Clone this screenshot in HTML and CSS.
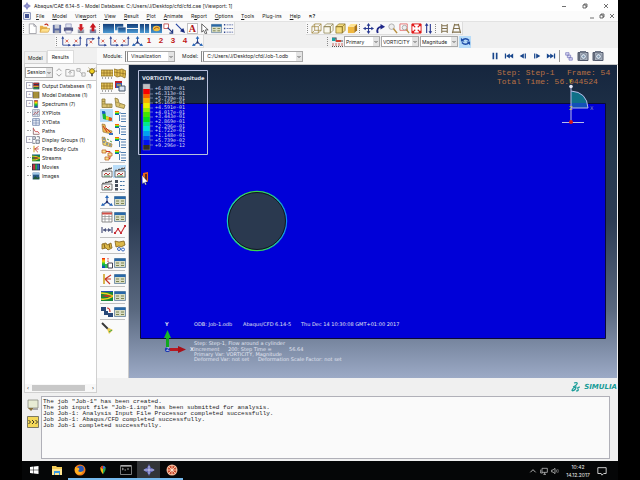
FILE: index.html
```
<!DOCTYPE html>
<html lang="en">
<head>
<meta charset="utf-8">
<title>Abaqus/CAE 6.14-5</title>
<link rel="stylesheet" href="styles.css">
</head>
<body>
<svg class="defs" aria-hidden="true">
  <defs>
    <linearGradient id="rainbow" x1="0" y1="0" x2="0" y2="1"><stop offset="0" stop-color="#f01010"/><stop offset=".3" stop-color="#f8e000"/><stop offset=".6" stop-color="#10c830"/><stop offset="1" stop-color="#1030e0"/></linearGradient>
    <linearGradient id="pane" x1="0" y1="0" x2="0" y2="1"><stop offset="0" stop-color="#123c78"/><stop offset="1" stop-color="#4c9bd4"/></linearGradient>
    <symbol id="logo" viewBox="0 0 12 12"><path d="M6 0 8 4 12 6 8 8 6 12 4 8 0 6 4 4Z" fill="#6468b4"/><path d="M2.500 4h7v4h-7z" fill="#6468b4"/><path d="M1 6h10M6 2v8" stroke="#d8daf4" stroke-width=".8"/></symbol>
    <symbol id="new" viewBox="0 0 12 12"><path d="M2.500 1h5l2.500 2.500v8H2.500z" fill="#fff" stroke="#8c8c94" stroke-width=".8"/><path d="M7.500 1v2.500H10" fill="none" stroke="#8c8c94" stroke-width=".8"/></symbol>
    <symbol id="open" viewBox="0 0 12 12"><path d="M1 10V3h3l1 1h4v6z" fill="#e8b048"/><path d="M1 10 3 6h9l-2 4z" fill="#ffe08c" stroke="#c08828" stroke-width=".5"/><path d="M6 2q3-2 4 1" fill="none" stroke="#c03020" stroke-width="1.200"/></symbol>
    <symbol id="save" viewBox="0 0 12 12"><path d="M2 2h9v9H2z" fill="#5868a0"/><path d="M4 2h5v4H4z" fill="#c8ccd8"/><path d="M4 8h5v3H4z" fill="#a8acb8"/></symbol>
    <symbol id="print" viewBox="0 0 12 12"><path d="M3 1h6v4H3z" fill="#e0e4f0" stroke="#7478a8" stroke-width=".6"/><path d="M1 5h10v4H1z" fill="#555a88"/><path d="M3 8h6v3H3z" fill="#f4f4f4" stroke="#7478a8" stroke-width=".6"/></symbol>
    <symbol id="dbdown" viewBox="0 0 12 12"><path d="M3 7h7v4H3z" fill="#a0a4b8"/><path d="M5 1h3v4h2L6.500 9 3 5h2z" fill="#d02028"/><path d="M4 10h5" stroke="#555" stroke-width=".8"/></symbol>
    <symbol id="dbup" viewBox="0 0 12 12"><path d="M3 7h7v4H3z" fill="#8086a8"/><path d="M5 9h3V5h2L6.500 0 3 5h2z" fill="#c81820"/></symbol>
    <symbol id="pane1" viewBox="0 0 12 12"><path d="M0 1h12v10H0z" fill="url(#pane)"/></symbol>
    <symbol id="pane2" viewBox="0 0 12 12"><path d="M0 1h9v7H0z" fill="url(#pane)"/><path d="M3 4.500h9V11H3z" fill="url(#pane)" stroke="#fff" stroke-width=".6"/></symbol>
    <symbol id="pane3" viewBox="0 0 12 12"><path d="M0 1h12v4.500H0zM0 6.500h12V11H0z" fill="url(#pane)"/></symbol>
    <symbol id="pane4" viewBox="0 0 12 12"><path d="M1 1h4.500v10H1zM6.500 1H11v10H6.500z" fill="url(#pane)"/></symbol>
    <symbol id="pane5" viewBox="0 0 12 12"><path d="M0 1h12v10H0z" fill="url(#pane)"/><ellipse cx="6" cy="6" rx="4" ry="3" fill="#f0c040"/><path d="M3 7q3-4 6-1" fill="none" stroke="#a84818"/></symbol>
    <symbol id="link" viewBox="0 0 12 12"><path d="M1 1h5v5H1z" fill="#fff" stroke="#b83030" stroke-width=".8"/><path d="m5 5 5 5M10.500 7v4H7" fill="none" stroke="#203880" stroke-width="1.300"/></symbol>
    <symbol id="arrow" viewBox="0 0 12 12"><path d="m1 1 7 7" stroke="#2040a0" stroke-width="1.200"/><path d="M11 11 5.500 9 9 5.500z" fill="#182c80"/></symbol>
    <symbol id="letter" viewBox="0 0 12 12"><path d="M.5.5h11v11H.5z" fill="#fff" stroke="#8c8c8c" stroke-width=".6"/><text x="2" y="10" font-family="Liberation Serif, serif" font-weight="bold" font-size="11" fill="#b01818">A</text></symbol>
    <symbol id="pointer" viewBox="0 0 12 12"><path d="M3 1v9l2-2 2 4 1.500-.8L7 7.500h3z" fill="#fff" stroke="#333" stroke-width=".8"/></symbol>
    <symbol id="table" viewBox="0 0 12 12"><path d="M.5 1.500h11v9H.5z" fill="#d8dcc4" stroke="#6080a0" stroke-width=".8"/><path d="M.5 1.500h11v2.500H.5z" fill="#2868a8"/><path d="M2 6h3M7 6h3M2 8.500h3M7 8.500h3" stroke="#7c8450"/></symbol>
    <symbol id="list" viewBox="0 0 12 12"><path d="M1 2h1.500M1 6h1.500M1 10h1.500" stroke="#304890" stroke-width="1.600"/><path d="M4 2h7M4 6h7M4 10h7" stroke="#6878b0" stroke-dasharray="2 .7"/></symbol>
    <symbol id="wirebox" viewBox="0 0 12 12"><path d="M1 4h7v7H1zM4 1h7v7H4zM1 4l3-3M8 4l3-3M1 11l3-3M8 11l3-3" fill="none" stroke="#a08840" stroke-width=".8"/></symbol>
    <symbol id="whitebox" viewBox="0 0 12 12"><path d="M1 4h7v7H1zM1 4l3-3h7v7l-3 3V4zM8 4l3-3" fill="#faf9ee" stroke="#8c8050" stroke-width=".8"/></symbol>
    <symbol id="yellowbox" viewBox="0 0 12 12"><path d="M1 4h7v7H1zM1 4l3-3h7v7l-3 3V4zM8 4l3-3" fill="#f4dc80" stroke="#8c7428" stroke-width=".8"/></symbol>
    <symbol id="solidbox" viewBox="0 0 12 12"><path d="M1 4h7v7H1z" fill="#f0b840"/><path d="m1 4 3-3h7L8 4z" fill="#ffe490"/><path d="m8 4 3-3v7l-3 3z" fill="#a87418"/></symbol>
    <symbol id="pan" viewBox="0 0 12 12"><path d="M6 1v10M1 6h10" stroke="#283890" stroke-width="1.200"/><path d="m6 0 2 3H4zM6 12l2-3H4zM0 6l3-2v4zM12 6 9 4v4z" fill="#283890"/></symbol>
    <symbol id="rotate" viewBox="0 0 12 12"><path d="M3 11Q1 5 7 4" fill="none" stroke="#202888" stroke-width="2"/><path d="m6 1 5 3-5 3z" fill="#202888"/></symbol>
    <symbol id="zoom" viewBox="0 0 12 12"><circle cx="5" cy="4" r="3" fill="#eee" stroke="#aaa"/><path d="m7 6 4 5" stroke="#b89040" stroke-width="1.600"/></symbol>
    <symbol id="zoombox" viewBox="0 0 12 12"><path d="M1 1h8v7H1z" fill="none" stroke="#e05050" stroke-width=".8"/><circle cx="6" cy="5" r="2.500" fill="#eee" stroke="#aaa"/><path d="m8 7 3 4" stroke="#b89040" stroke-width="1.500"/></symbol>
    <symbol id="fit" viewBox="0 0 12 12"><path d="M1 1h10v10H1z" fill="#fff" stroke="#e01818"/><path d="m2 2 8 8M10 2l-8 8" stroke="#e01818" stroke-width="1.400"/><circle cx="6" cy="6" r="2" fill="#fff"/><path d="M1 1h3L1 4zM11 1H8l3 3zM1 11h3L1 8zM11 11H8l3-3z" fill="#e01818"/></symbol>
    <symbol id="updown" viewBox="0 0 12 12"><path d="M4 2v9M8 1v9" stroke="#283890" stroke-width="1.200"/><path d="m4 0 2 3H2zM8 12l2-3H6z" fill="#283890"/></symbol>
    <symbol id="ladder" viewBox="0 0 12 12"><path d="M3 1v10M9 1v10M3 3h6M3 6h6M3 9h6" stroke="#80704c" stroke-width="1.100"/></symbol>
    <symbol id="persp" viewBox="0 0 12 12"><path d="M4 1 1.500 11M8 1l2.500 10M4 2h4M3 6h6M2 10h8" stroke="#80704c" stroke-width="1.200"/></symbol>
    <symbol id="axisa" viewBox="0 0 12 12"><path d="M3 10V2M3 10h8" stroke="#304898" fill="none"/><path d="M3 0 4.500 3h-3zM12 10 9 8.500v3z" fill="#304898"/><path d="m6 4 3 3M9 4 6 7" stroke="#d04030" stroke-width=".9"/></symbol>
    <symbol id="axisb" viewBox="0 0 12 12"><path d="M9 10V2M9 10H1" stroke="#304898" fill="none"/><path d="m9 0 1.500 3h-3zM0 10l3-1.500v3z" fill="#304898"/><path d="m3 4 3 3M6 4 3 7" stroke="#d04030" stroke-width=".9"/></symbol>
    <symbol id="axisc" viewBox="0 0 12 12"><path d="M3 3v8M3 3h8" stroke="#304898" fill="none"/><path d="m3 12 1.500-3h-3zM12 3 9 1.500v3z" fill="#304898"/><path d="m6 5 3 3M9 5 6 8" stroke="#d04030" stroke-width=".9"/></symbol>
    <symbol id="triad" viewBox="0 0 12 12"><path d="M6 7V2M6 7l-4 3M6 7l4 3" stroke="#2850a0" stroke-width="1.100"/><path d="m6 0 2 3H4zM0 11l1.500-3L4 10.500zM12 11l-1.500-3L8 10.500z" fill="#2868b8"/><circle cx="6" cy="7" r="1.200" fill="#283068"/></symbol>
    <symbol id="var" viewBox="0 0 12 12"><path d="M1 2h4v3h7" fill="none" stroke="#404858" stroke-width="1.200"/><path d="M1 2h3v3H1z" fill="#18a0a0"/><path d="M5 4h5v2H5z" fill="#d04030"/><path d="M2 7v3M5 7v3M8 7v3M11 7v3" stroke="#c04840" stroke-width=".8"/><path d="M1 10.500h11" stroke="#555" stroke-dasharray="1 1"/></symbol>
    <symbol id="sync" viewBox="0 0 12 12"><path d="M2 5q4-4 8 0M10 7q-4 4-8 0" fill="none" stroke="#1c4ca8" stroke-width="1.600"/><path d="M1 2v4h4zM11 10V6H7z" fill="#1c4ca8"/></symbol>
    <symbol id="pause" viewBox="0 0 12 12"><path d="M3 2h2v8H3zM7 2h2v8H7z" fill="#18468c"/></symbol>
    <symbol id="first" viewBox="0 0 12 12"><path d="M1 3h1.500v6H1zM7 3v6L2.500 6zM11 3v6L6.500 6z" fill="#18468c"/></symbol>
    <symbol id="prev" viewBox="0 0 12 12"><path d="M7 3v6L2 6zM8 3h1.500v6H8z" fill="#18468c"/></symbol>
    <symbol id="next" viewBox="0 0 12 12"><path d="M5 3v6l5-3zM2.500 3H4v6H2.500z" fill="#18468c"/></symbol>
    <symbol id="last" viewBox="0 0 12 12"><path d="M9.500 3H11v6H9.500zM5 3v6l4.500-3zM1 3v6l4.500-3z" fill="#18468c"/></symbol>
    <symbol id="frames" viewBox="0 0 12 12"><path d="M2 2h4v3H2zM4 5h4v3H4zM6 8h4v3H6z" fill="#d8d8f4" stroke="#7070b8" stroke-width=".8"/></symbol>
    <symbol id="camera" viewBox="0 0 12 12"><path d="M1 2.500h10v8H1z" fill="#a8b0bc" stroke="#50586c"/><path d="M3 1h6v2H3z" fill="#707888"/><path d="M1 3h2v8H1z" fill="#606878"/><circle cx="6.500" cy="6.500" r="2.800" fill="#e8f0f8" stroke="#707c90"/><circle cx="6.500" cy="6.500" r="1.200" fill="#8098b0"/></symbol>
    <symbol id="mesh" viewBox="0 0 12 12"><path d="M0 3h12v6H0z" fill="#e0c058" stroke="#8c6c20" stroke-width=".8"/><path d="M3 3v6M6 3v6M9 3v6M0 6h12" stroke="#8c6c20" stroke-width=".7"/><path d="M1 11h10" stroke="#555" stroke-dasharray="1 2"/></symbol>
    <symbol id="meshb" viewBox="0 0 12 12"><path d="m0 2 4 1 4-1 4 2-1 7-4-2-4 1-3-2z" fill="#e4c050" stroke="#8c6c20" stroke-width=".8"/><path d="M3 3v6M6 3v6M9 3v6M0 5l12 2" stroke="#8c6c20" stroke-width=".7"/></symbol>
    <symbol id="ell" viewBox="0 0 12 12"><path d="M1 2h3v5h7v3.500H1z" fill="#d8c070" stroke="#8c7838" stroke-width=".8"/><path d="M1 4.500h3M1 7h3M6 7v3M9 7v3" stroke="#8c7838" stroke-width=".6"/></symbol>
    <symbol id="ellb" viewBox="0 0 12 12"><path d="m1 1 3 1 1 4 6 2-1 3.500-8-2z" fill="#dcc470" stroke="#8c7838" stroke-width=".8"/><path d="m2 5 2.500 1M6 7 5.500 9" stroke="#8c7838" stroke-width=".6"/></symbol>
    <symbol id="contour" viewBox="0 0 12 12"><path d="m1 1 3 .5 1 4.500 6 2-.5 3L2 9z" fill="#18b838"/><path d="m1 1 3 .5.5 2L1.500 4z" fill="#1850d8"/><path d="m8 7 3 1-.5 3-3-.5z" fill="#e84818"/><path d="m5 6 3 1-.5 3L5 9.700z" fill="#f0d020"/></symbol>
    <symbol id="vector" viewBox="0 0 12 12"><path d="m1 1 3 .5 1 4.500 6 2-.5 3L2 9z" fill="#e8b850" stroke="#8c6830" stroke-width=".6"/><path d="m2 3 4 6M5 5l5 5" stroke="#d03020"/><path d="M8 10h4v2H8z" fill="#3870c0"/></symbol>
    <symbol id="orient" viewBox="0 0 12 12"><path d="m1 1 3 .5 1 4.500 6 2-.5 3L2 9z" fill="#e8d070" stroke="#8c6830" stroke-width=".6"/><path d="M2 3h2M2 6h2M5 8h2M8 9h2" stroke="#3060c0"/><path d="m6 3 2 1M9 5l2 1" stroke="#58a048"/></symbol>
    <symbol id="opts" viewBox="0 0 12 12"><path d="M1 1h4v4H1z" fill="url(#rainbow)"/><path d="M5 3h2M7 6h5M7 9h5M7 11.500h5M5.500 5v6" stroke="#3c70a8" stroke-width=".9"/><path d="M7 3.500h5" stroke="#3c70a8" stroke-width=".9"/></symbol>
    <symbol id="spectrum" viewBox="0 0 12 12"><path d="M1 1h7v7H1z" fill="#c02028"/><path d="M2 3h6v5H2z" fill="#3858b0"/><path d="M5 6h6v5H5z" fill="#dce4f0" stroke="#456"/><path d="M3 5h4" stroke="#f8d020"/></symbol>
    <symbol id="boxes" viewBox="0 0 12 12"><path d="M1 1h4v3H1zM7 4h4v3H7zM4 8h4v3H4z" fill="#f8e090" stroke="#c06828" stroke-width=".8"/><path d="M5 2.500h4V4M9 7v2.500H8" fill="none" stroke="#d03820"/></symbol>
    <symbol id="clap" viewBox="0 0 12 12"><path d="M1 5h10v6H1z" fill="#f4f4f4" stroke="#555" stroke-width=".8"/><path d="m1 4 9.500-3 .5 2-9.500 2z" fill="#555"/><path d="m3 4 .5-1M6 3l.5-1M9 2l.5-1" stroke="#fff"/><path d="m3 9 2-2 2 2 2-2" fill="none" stroke="#b83830"/><path d="M3 10h6" stroke="#308848" stroke-width=".8"/></symbol>
    <symbol id="checks" viewBox="0 0 12 12"><path d="M1 1h3v3H1zM1 5h3v3H1zM1 9h3v2.500H1z" fill="#444c58"/><path d="M6 2.500h5M6 6.500h5M6 10.500h5" stroke="#4878a8" stroke-dasharray="2 .6"/></symbol>
    <symbol id="sheet" viewBox="0 0 12 12"><path d="M1 1h10v10H1z" fill="#fff" stroke="#707070" stroke-width=".8"/><path d="M1 2.500h10" stroke="#d05048" stroke-width="2"/><path d="M1 5.500h10M1 8h10M4 4v7M8 4v7" stroke="#888" stroke-width=".7"/></symbol>
    <symbol id="span" viewBox="0 0 12 12"><path d="M1 3v6M11 3v6M2 6h8" stroke="#505880" stroke-width="1.200"/><path d="m2 6 3-2v4zM10 6 7 4v4z" fill="#505880"/></symbol>
    <symbol id="chart" viewBox="0 0 12 12"><path d="m1 9 3-4 3 4 4-7" fill="none" stroke="#c83038" stroke-width="1.100"/><path d="M0 8h2v2H0zM3 4h2v2H3zM6 8h2v2H6zM10 1h2v2h-2z" fill="#c83038"/></symbol>
    <symbol id="bits" viewBox="0 0 12 12"><path d="m1 4 4-1 1 2 4-2 1 5-4 2-2-2-4 1z" fill="#dcb848" stroke="#806018" stroke-width=".8"/><path d="m3 4 1 4M8 4l1 4" stroke="#806018"/></symbol>
    <symbol id="bitsb" viewBox="0 0 12 12"><path d="m1 1 4 1 5-1 1 4-4 2-2-1-3 1z" fill="#dcb848" stroke="#806018" stroke-width=".8"/><circle cx="5" cy="9" r="1.500" fill="none" stroke="#3868c0"/><circle cx="9" cy="9.500" r="1.500" fill="none" stroke="#3868c0"/></symbol>
    <symbol id="cut" viewBox="0 0 12 12"><path d="M1 1h3v10H1z" fill="url(#rainbow)"/><path d="M4 7h5v4H4z" fill="#30b858"/><path d="M7 1v8" stroke="#d03030" stroke-dasharray="1.500 1"/><path d="M7 6h4.500v5H7z" fill="#fff" stroke="#445"/></symbol>
    <symbol id="free" viewBox="0 0 12 12"><path d="M2 1h2v10H2z" fill="#d8b450"/><path d="m4 6 6-4M4 6l5 5M4 6h6" stroke="#c83828" stroke-width="1.200"/></symbol>
    <symbol id="stream" viewBox="0 0 12 12"><path d="M0 1h12v10H0z" fill="#188838"/><path d="M0 3q6 0 12 3M0 9q6 1 12-3" stroke="#f0d020" fill="none" stroke-width="1.500"/><path d="m0 6 6-1 6 1-6 1z" fill="#d03020"/><path d="M0 1h12v1H0z" fill="#2050b0"/></symbol>
    <symbol id="swap" viewBox="0 0 12 12"><path d="M0 1h5v4H0zM7 7h5v4H7zM3 5h4v4H3z" fill="#284878"/><path d="M6 2q3 0 3 4" fill="none" stroke="#c83028" stroke-width="1.200"/></symbol>
    <symbol id="brush" viewBox="0 0 12 12"><path d="m1 1 6 6" stroke="#383838" stroke-width="2"/><path d="m6 7 2-1 4 2-4 4z" fill="#e8c850"/><path d="m8 10 3-2" stroke="#30a850"/></symbol>
    <symbol id="db" viewBox="0 0 12 12"><path d="M2 1h9v10H2z" fill="#203058"/><path d="M2 2h8M2 5h8" stroke="#d03028" stroke-width="1.500"/><path d="M2 7h8" stroke="#f0c020" stroke-width="1.500"/><path d="M2 9.500h8" stroke="#28a848" stroke-width="1.500"/></symbol>
    <symbol id="mdb" viewBox="0 0 12 12"><path d="M1 1h10v10H1z" fill="#5c5030"/><path d="M2 3h8M2 6h8M2 9h8" stroke="#f0d040" stroke-width="1.500"/></symbol>
    <symbol id="spec" viewBox="0 0 12 12"><path d="M3.500.5h5v11h-5z" fill="url(#rainbow)" stroke="#334" stroke-width=".6"/></symbol>
    <symbol id="xyplot" viewBox="0 0 12 12"><path d="M1 1h10v10H1z" fill="#fff" stroke="#687898"/><path d="M1 4.500h10M1 8h10M4.500 1v10M8 1v10" stroke="#687898" stroke-width=".7"/><path d="m2 9 3-4 2 2 3-4" fill="none" stroke="#b04048"/></symbol>
    <symbol id="xydata" viewBox="0 0 12 12"><path d="M1 1h10v10H1z" fill="#eef2fa" stroke="#506898"/><path d="M1 4h10M1 7.500h10M6 1v10" stroke="#506898" stroke-width=".8"/></symbol>
    <symbol id="path" viewBox="0 0 12 12"><path d="M2 1v10h9" fill="none" stroke="#704040"/><path d="m2 2 3 5h4l2 3" fill="none" stroke="#c83838" stroke-width="1.200"/></symbol>
    <symbol id="groups" viewBox="0 0 12 12"><path d="M1 1h4v4H1zM6 6h5v5H6z" fill="#e8ecf4" stroke="#404858"/><path d="M1 7v4h4M7 1h4v4" fill="none" stroke="#404858"/></symbol>
    <symbol id="movie" viewBox="0 0 12 12"><path d="M0 1h12v10H0z" fill="#202838"/><path d="M1 2h4v8H1z" fill="#c03040"/><path d="M5 2h3v8H5z" fill="#28a850"/><path d="M8 2h3v8H8z" fill="#3060c0"/></symbol>
    <symbol id="image" viewBox="0 0 12 12"><path d="M1 1h10v10H1z" fill="#285888"/><path d="m1 11 4-5 3 3 3-2v4z" fill="#205838"/><path d="M1 1h10v3H1z" fill="#a0c8e8"/></symbol>
    <symbol id="spin" viewBox="0 0 12 12"><path d="m3 5 3-3 3 3M3 8l3 3 3-3" fill="none" stroke="#949494"/></symbol>
    <symbol id="folderup" viewBox="0 0 12 12"><path d="M1 3h4l1 1h5v7H1zM6 9V5M4 7l2-2 2 2" fill="none" stroke="#a0a0a0"/></symbol>
    <symbol id="chain" viewBox="0 0 12 12"><path d="M1 2h4v3H1zM4 5l4 4M7 7h4v4H7z" fill="none" stroke="#a4a4a4"/></symbol>
    <symbol id="bulb" viewBox="0 0 12 12"><circle cx="6" cy="5" r="3" fill="#f0d020" stroke="#685010"/><path d="M5 8h2v3H5z" fill="#444"/><path d="M0 5h2M10 5h2M2 1l1 1M10 1 9 2" stroke="#685010"/></symbol>
    <symbol id="note" viewBox="0 0 12 12"><path d="M1 1h10v8H1z" fill="#e8ecd4" stroke="#888c80" stroke-width=".8"/><path d="M1 9h6l-3 3z" fill="#88703c"/><path d="M6 9h5v2H6z" fill="#a8a8a8"/></symbol>
    <symbol id="prompt" viewBox="0 0 12 12"><path d="M.5.5h11v11H.5z" fill="#f4d858" stroke="#606050" stroke-width=".8"/><path d="m1.500 4 2 2-2 2M5 4l2 2-2 2M8.500 4l2 2-2 2" fill="none" stroke="#222" stroke-width=".9"/></symbol>
    <symbol id="win" viewBox="0 0 12 12"><path d="m2 3 3.500-.5v3.200H2zM6 2.400 10.500 2v3.700H6zM2 6.300h3.500v3.200L2 9zM6 6.300h4.500V10L6 9.600z" fill="#fff"/></symbol>
    <symbol id="explorer" viewBox="0 0 12 12"><path d="M1 2h4l1 1h5v8H1z" fill="#f4cc58"/><path d="M1 5h10v6H1z" fill="#ffe490"/><path d="M3 7h6v4H8V9H4v2H3z" fill="#3898e0"/></symbol>
    <symbol id="firefox" viewBox="0 0 12 12"><circle cx="6" cy="6" r="5.500" fill="#f07818"/><circle cx="6.500" cy="5" r="3.300" fill="#2858b8"/><path d="M1 3q2 1 4 1 1 2-1 3 2 2 5 0-1 4-5 3.500Q0 9 1 3z" fill="#ffb020"/></symbol>
    <symbol id="maps" viewBox="0 0 12 12"><path d="M6 11Q2 6 3 3q1-2 3-2z" fill="#f0b818"/><path d="M6 11q4-5 3-8-1-2-3-2z" fill="#20a850"/><path d="M3 3q1-2 3-2v4z" fill="#d83828"/><path d="M9 3Q8 1 6 1v4z" fill="#3070d8"/></symbol>
    <symbol id="cmd" viewBox="0 0 12 12"><path d="M.5 1.500h11v9H.5z" fill="#050505" stroke="#999" stroke-width=".8"/><path d="M1 2h10" stroke="#ddd"/><path d="m2 4 1.500 1L2 6M4.500 6H6M7 5h2" fill="none" stroke="#ddd" stroke-width=".7"/></symbol>
    <symbol id="pizza" viewBox="0 0 12 12"><circle cx="6" cy="6" r="5.500" fill="#f4b494"/><circle cx="6" cy="6" r="4.300" fill="#c84828"/><path d="M6 1v10M1 6h10M2.500 2.500l7 7M9.500 2.500l-7 7" stroke="#ffe0c8" stroke-width=".8"/><circle cx="6" cy="6" r="1.300" fill="#ffe0c8"/></symbol>
    <symbol id="up" viewBox="0 0 12 12"><path d="m2 8 4-4 4 4" fill="none" stroke="#ddd" stroke-width="1.200"/></symbol>
    <symbol id="net" viewBox="0 0 12 12"><path d="M3 2h8v6H3zM5 11h4M7 8v3M1 4v5h3" fill="none" stroke="#ddd"/></symbol>
    <symbol id="sound" viewBox="0 0 12 12"><path d="M1 4.500h2L6 2v8L3 7.500H1z" fill="none" stroke="#ddd"/><path d="M8 4q1 2 0 4M10 3q2 3 0 6" fill="none" stroke="#bbb" stroke-width=".8"/></symbol>
    <symbol id="notif" viewBox="0 0 12 12"><path d="M1 2h10v7H8l-2 2-1-2H1z" fill="none" stroke="#eee"/></symbol>
  </defs>
</svg>

<div class="screen">
  <header class="titlebar">
    <svg class="ic ic-s"><use href="#logo"/></svg>
    <span class="title">Abaqus/CAE 6.14-5 - Model Database: C:/Users/J/Desktop/cfd/cfd.cae [Viewport: 1]</span>
    <button class="wbtn" aria-label="Minimize"><svg class="ic-w" viewBox="0 0 6 6"><path d="M1 3.500h4"/></svg></button>
    <button class="wbtn" aria-label="Restore"><svg class="ic-w" viewBox="0 0 6 6"><path d="M1 2h3v3H1zM2 2V1h3v3H4"/></svg></button>
    <button class="wbtn" aria-label="Close"><svg class="ic-w" viewBox="0 0 6 6"><path d="m1 1 4 4M5 1 1 5"/></svg></button>
  </header>
  <nav class="menubar">
    <svg class="ic ic-s" viewBox="0 0 12 12"><path d="M1 1h10v10H1z" fill="#fff" stroke="#405090"/><path d="M3 3h6v6H3z" fill="#405090"/></svg>
    <button><u>F</u>ile</button><button><u>M</u>odel</button><button>Vie<u>w</u>port</button><button><u>V</u>iew</button><button><u>R</u>esult</button><button><u>P</u>lot</button><button><u>A</u>nimate</button><button>R<u>e</u>port</button><button><u>O</u>ptions</button><button><u>T</u>ools</button><button>Plug-ins</button><button><u>H</u>elp</button><button><b>↖?</b></button>
    <span class="mdi"><button aria-label="Minimize viewport"><svg class="ic-w" viewBox="0 0 6 6"><path d="M1 5h4"/></svg></button><button aria-label="Restore viewport"><svg class="ic-w" viewBox="0 0 6 6"><path d="M1 2h3v3H1zM2 2V1h3v3H4"/></svg></button><button aria-label="Close viewport"><svg class="ic-w" viewBox="0 0 6 6"><path d="m1 1 4 4M5 1 1 5"/></svg></button></span>
  </nav>

  <div class="bars">
    <div class="bar bar-file">
      <i class="grip"></i>
      <button aria-label="New"><svg class="ic"><use href="#new"/></svg></button><button aria-label="Open"><svg class="ic"><use href="#open"/></svg></button><button aria-label="Save"><svg class="ic"><use href="#save"/></svg></button><button aria-label="Print"><svg class="ic"><use href="#print"/></svg></button><button aria-label="Load"><svg class="ic"><use href="#dbdown"/></svg></button><button aria-label="Store"><svg class="ic"><use href="#dbup"/></svg></button>
      <i class="grip"></i>
      <button aria-label="Single"><svg class="ic"><use href="#pane1"/></svg></button><button aria-label="Cascade"><svg class="ic"><use href="#pane2"/></svg></button><button aria-label="Tile rows"><svg class="ic"><use href="#pane3"/></svg></button><button aria-label="Tile columns"><svg class="ic"><use href="#pane4"/></svg></button><button aria-label="Background"><svg class="ic"><use href="#pane5"/></svg></button><button aria-label="Link"><svg class="ic"><use href="#link"/></svg></button><button aria-label="Arrow"><svg class="ic"><use href="#arrow"/></svg></button><button aria-label="Text"><svg class="ic"><use href="#letter"/></svg></button><button aria-label="Select"><svg class="ic"><use href="#pointer"/></svg></button><button aria-label="Table"><svg class="ic"><use href="#table"/></svg></button><button aria-label="List"><svg class="ic"><use href="#list"/></svg></button>
    </div>
    <div class="bar bar-view">
      <i class="grip"></i>
      <button aria-label="Wireframe"><svg class="ic"><use href="#wirebox"/></svg></button><button aria-label="Hidden"><svg class="ic"><use href="#whitebox"/></svg></button><button aria-label="Filled"><svg class="ic"><use href="#yellowbox"/></svg></button><button aria-label="Shaded"><svg class="ic"><use href="#solidbox"/></svg></button>
      <i class="grip"></i>
      <button aria-label="Pan"><svg class="ic"><use href="#pan"/></svg></button><button aria-label="Rotate"><svg class="ic"><use href="#rotate"/></svg></button><button aria-label="Magnify"><svg class="ic"><use href="#zoom"/></svg></button><button aria-label="Box zoom"><svg class="ic"><use href="#zoombox"/></svg></button><button aria-label="Fit"><svg class="ic"><use href="#fit"/></svg></button><button aria-label="Cycle"><svg class="ic"><use href="#updown"/></svg></button>
      <i class="grip"></i>
      <button aria-label="Parallel"><svg class="ic"><use href="#ladder"/></svg></button><button aria-label="Perspective"><svg class="ic"><use href="#persp"/></svg></button>
    </div>
  </div>
  <div class="bars">
    <div class="bar bar-axes">
      <i class="grip"></i>
      <button aria-label="Front"><svg class="ic"><use href="#axisa"/></svg></button><button aria-label="Back"><svg class="ic"><use href="#axisb"/></svg></button><button aria-label="Top"><svg class="ic"><use href="#axisc"/></svg></button><button aria-label="Bottom"><svg class="ic"><use href="#axisa"/></svg></button><button aria-label="Left"><svg class="ic"><use href="#axisa"/></svg></button><button aria-label="Right"><svg class="ic"><use href="#axisb"/></svg></button><button aria-label="Iso"><svg class="ic"><use href="#triad"/></svg></button><button class="num">1</button><button class="num">2</button><button class="num">3</button><button class="num">4</button><button aria-label="Triad"><svg class="ic"><use href="#triad"/></svg></button>
    </div>
    <div class="bar bar-field">
      <i class="grip"></i>
      <svg class="ic"><use href="#var"/></svg>
      <select class="sel w-primary" aria-label="Variable type"><option>Primary</option></select>
      <select class="sel w-var" aria-label="Variable"><option>VORTICITY</option></select>
      <select class="sel w-var" aria-label="Component"><option>Magnitude</option></select>
      <button class="on" aria-label="Sync"><svg class="ic"><use href="#sync"/></svg></button>
    </div>
  </div>

  <div class="work">
    <aside class="side">
      <div class="tabs" role="tablist"><button role="tab">Model</button><button role="tab" class="cur" aria-selected="true">Results</button></div>
      <div class="panel">
        <div class="session">
          <select class="sel w-session" aria-label="Session"><option>Session</option></select>
          <button aria-label="Order"><svg class="ic ic-m"><use href="#spin"/></svg></button><button aria-label="Up"><svg class="ic ic-m"><use href="#folderup"/></svg></button><button aria-label="Link"><svg class="ic ic-m"><use href="#chain"/></svg></button><button aria-label="Tip"><svg class="ic ic-m"><use href="#bulb"/></svg></button>
        </div>
        <ul class="tree">
          <li class="exp"><svg class="ic-t"><use href="#db"/></svg>Output Databases (1)</li>
          <li class="exp"><svg class="ic-t"><use href="#mdb"/></svg>Model Database (1)</li>
          <li class="exp"><svg class="ic-t"><use href="#spec"/></svg>Spectrums (7)</li>
          <li><svg class="ic-t"><use href="#xyplot"/></svg>XYPlots</li>
          <li><svg class="ic-t"><use href="#xydata"/></svg>XYData</li>
          <li><svg class="ic-t"><use href="#path"/></svg>Paths</li>
          <li class="exp"><svg class="ic-t"><use href="#groups"/></svg>Display Groups (1)</li>
          <li><svg class="ic-t"><use href="#free"/></svg>Free Body Cuts</li>
          <li><svg class="ic-t"><use href="#stream"/></svg>Streams</li>
          <li><svg class="ic-t"><use href="#movie"/></svg>Movies</li>
          <li><svg class="ic-t"><use href="#image"/></svg>Images</li>
        </ul>
        <div class="hscroll"><span>‹</span><i></i><span>›</span></div>
      </div>
    </aside>

    <section class="main">
      <div class="context">
        <label for="module">Module:</label>
        <select id="module" class="sel spinsel w-module"><option>Visualization</option></select>
        <label for="model">Model:</label>
        <select id="model" class="sel spinsel w-model"><option>C:/Users/J/Desktop/cfd/Job-1.odb</option></select>
        <div class="play">
          <button aria-label="Pause"><svg class="ic ic-m"><use href="#pause"/></svg></button><button aria-label="First"><svg class="ic ic-m"><use href="#first"/></svg></button><button aria-label="Previous"><svg class="ic ic-m"><use href="#prev"/></svg></button><button aria-label="Next"><svg class="ic ic-m"><use href="#next"/></svg></button><button aria-label="Last"><svg class="ic ic-m"><use href="#last"/></svg></button>
        </div>
        <div class="play shots">
          <button aria-label="Frames"><svg class="ic ic-m"><use href="#frames"/></svg></button><button aria-label="Capture"><svg class="ic"><use href="#camera"/></svg></button><button aria-label="Capture options"><svg class="ic"><use href="#camera"/></svg></button>
        </div>
      </div>
      <div class="stage">
        <div class="tools">
          <div class="group"><button aria-label="Undeformed"><svg class="ic"><use href="#mesh"/></svg></button><button aria-label="Deformed"><svg class="ic"><use href="#meshb"/></svg></button><button aria-label="Both"><svg class="ic"><use href="#mesh"/></svg></button><button aria-label="Common options"><svg class="ic"><use href="#spectrum"/></svg></button></div>
          <div class="group tall"><button aria-label="Plot undeformed"><svg class="ic"><use href="#ell"/></svg></button><button aria-label="Plot deformed"><svg class="ic"><use href="#ellb"/></svg></button><button class="on" aria-label="Contours"><svg class="ic"><use href="#contour"/></svg></button><button aria-label="Contour options"><svg class="ic"><use href="#opts"/></svg></button><button aria-label="Symbols"><svg class="ic"><use href="#vector"/></svg></button><button aria-label="Symbol options"><svg class="ic"><use href="#opts"/></svg></button><button aria-label="Orientations"><svg class="ic"><use href="#orient"/></svg></button><button aria-label="Orientation options"><svg class="ic"><use href="#opts"/></svg></button><button aria-label="Superimpose"><svg class="ic"><use href="#boxes"/></svg></button><button aria-label="Superimpose options"><svg class="ic"><use href="#opts"/></svg></button></div>
          <div class="group tall"><button aria-label="Scale animation"><svg class="ic"><use href="#clap"/></svg></button><button class="on" aria-label="Time animation"><svg class="ic"><use href="#clap"/></svg></button><button aria-label="Harmonic animation"><svg class="ic"><use href="#clap"/></svg></button><button aria-label="Animation options"><svg class="ic"><use href="#checks"/></svg></button></div>
          <div class="group"><button aria-label="Coordinate system"><svg class="ic"><use href="#triad"/></svg></button><button aria-label="Coordinate manager"><svg class="ic"><use href="#table"/></svg></button></div>
          <div class="group"><button aria-label="XY data"><svg class="ic"><use href="#sheet"/></svg></button><button aria-label="XY manager"><svg class="ic"><use href="#table"/></svg></button><button aria-label="XY axis"><svg class="ic"><use href="#span"/></svg></button><button aria-label="XY curve"><svg class="ic"><use href="#chart"/></svg></button></div>
          <div class="group"><button aria-label="Display group"><svg class="ic"><use href="#bits"/></svg></button><button aria-label="Display group options"><svg class="ic"><use href="#bitsb"/></svg></button></div>
          <div class="group tall"><button aria-label="View cut"><svg class="ic"><use href="#cut"/></svg></button><button aria-label="View cut manager"><svg class="ic"><use href="#table"/></svg></button></div>
          <div class="group"><button aria-label="Free body"><svg class="ic"><use href="#free"/></svg></button><button aria-label="Free body manager"><svg class="ic"><use href="#table"/></svg></button></div>
          <div class="group tall"><button aria-label="Stream"><svg class="ic"><use href="#stream"/></svg></button><button aria-label="Stream manager"><svg class="ic"><use href="#table"/></svg></button></div>
          <div class="group"><button aria-label="Overlay"><svg class="ic"><use href="#swap"/></svg></button><button aria-label="Overlay manager"><svg class="ic"><use href="#table"/></svg></button></div>
          <div class="group last"><button aria-label="Color code"><svg class="ic"><use href="#brush"/></svg></button></div>
        </div>
        <svg class="view" viewBox="129 65 488 313" preserveAspectRatio="xMidYMid slice" role="img" aria-label="Vorticity contour plot">
          <defs>
            <linearGradient id="ring" x1="0" y1="0" x2="1" y2="0"><stop offset="0" stop-color="#18c8b8"/><stop offset=".4" stop-color="#40d840"/><stop offset=".7" stop-color="#28d070"/><stop offset="1" stop-color="#1088f0"/></linearGradient>
          </defs>
          <path d="M140.500 103.500h465v235h-465z" fill="#0000d8" stroke="#0a0a38"/>
          <circle cx="257" cy="221" r="29.500" fill="#2a394f" stroke="url(#ring)" stroke-width="1.500"/>
          <circle cx="257" cy="221" r="28.500" fill="none" stroke="#101820"/>
          <path d="M138.500 70.500h69v84h-69z" fill="none" stroke="#b8c0dc"/>
          <text class="vt head" x="142" y="80">VORTICITY, Magnitude</text>
          <g shape-rendering="crispEdges">
            <path d="M143 84h7v5h-7z" fill="#c0c0c0"/><path d="M143 89h7v5h-7z" fill="#f80000"/><path d="M143 94h7v4h-7z" fill="#f86000"/><path d="M143 98h7v5h-7z" fill="#f8b000"/><path d="M143 103h7v5h-7z" fill="#f0f000"/><path d="M143 108h7v4h-7z" fill="#98f000"/><path d="M143 112h7v5h-7z" fill="#40e800"/><path d="M143 117h7v5h-7z" fill="#00e020"/><path d="M143 122h7v4h-7z" fill="#00e890"/><path d="M143 126h7v5h-7z" fill="#00e0e0"/><path d="M143 131h7v5h-7z" fill="#00a0f0"/><path d="M143 136h7v4h-7z" fill="#0058f0"/><path d="M143 140h7v5h-7z" fill="#0010f0"/><path d="M143 145h7v5h-7z" fill="#302c24"/>
          </g>
          <path d="M143 84h7v66h-7z" fill="none" stroke="#8088a0" stroke-width=".5"/>
          <path d="M150 89h3M150 94h3M150 98h3M150 103h3M150 108h3M150 112h3M150 117h3M150 122h3M150 126h3M150 131h3M150 136h3M150 140h3M150 145h3" stroke="#a8b0cc" stroke-width=".6"/>
          <g class="vm">
            <text x="155" y="90">+6.887e-01</text><text x="155" y="95">+6.313e-01</text><text x="155" y="100">+5.739e-01</text><text x="155" y="104">+5.165e-01</text><text x="155" y="109">+4.591e-01</text><text x="155" y="114">+4.017e-01</text><text x="155" y="118">+3.443e-01</text><text x="155" y="123">+2.869e-01</text><text x="155" y="128">+2.296e-01</text><text x="155" y="132">+1.722e-01</text><text x="155" y="137">+1.148e-01</text><text x="155" y="142">+5.739e-02</text><text x="155" y="147">+9.296e-12</text>
          </g>
          <path d="m143 173 5-1v10l-5-1z" fill="#e86818"/><path d="M145 174h2v6h-2z" fill="#5c2c20"/>
          <path d="m142 175 .3 9 2-1.500 1 2.500 1.200-.5-1-2.500h2.500z" fill="#fff" stroke="#222" stroke-width=".4"/>
          <text class="vh" x="497" y="75">Step: Step-1</text><text class="vh" x="567" y="75">Frame: 54</text>
          <text class="vh" x="497" y="84">Total Time: 56.044524</text>
          <path d="M571 91q16 1 17 17h-17z" fill="#107088"/><path d="M571 103h16l1 5h-17z" fill="#1450b8"/>
          <path d="M571 87v34M571 91q16 1 17 17h-17M562 122.500h22" fill="none" stroke="#b8bce8"/>
          <circle cx="571" cy="86.500" r="1.800" fill="#e8e8f8"/><circle cx="571" cy="122" r="2" fill="#d81818"/>
          <text class="vt yel" x="569" y="83">Y</text><text class="vt yel" x="569" y="110">Z</text><text class="vt dim" x="590" y="110">X</text>
          <text class="vt head" x="165" y="326">Y</text>
          <path d="M167.500 348V338" stroke="#10a820" stroke-width="3"/><path d="m167.500 330 3.500 8h-7z" fill="#18b828"/>
          <path d="M169 349.500h10" stroke="#b81820" stroke-width="3"/><path d="m186 349.500-8-3.500v7z" fill="#a81018"/>
          <circle cx="167.500" cy="349.500" r="2.600" fill="#2038b0"/><text class="vt" x="166" y="351">Z</text>
          <text class="vt head" x="190" y="351">X</text>
          <text class="vt" x="194" y="326">ODB: Job-1.odb</text><text class="vt" x="243" y="326">Abaqus/CFD 6.14-5</text><text class="vt" x="301" y="326">Thu Dec 14 10:30:08 GMT+01:00 2017</text>
          <text class="vt" x="194" y="345">Step: Step-1, Flow around a cylinder</text>
          <text class="vt" x="194" y="351">Increment</text><text class="vt" x="228" y="351">200: Step Time =</text><text class="vt" x="289" y="351">56.64</text>
          <text class="vt" x="194" y="356">Primary Var: VORTICITY, Magnitude</text>
          <text class="vt" x="194" y="361">Deformed Var: not set</text><text class="vt" x="258" y="361">Deformation Scale Factor: not set</text>
        </svg>
      </div>
      <div class="brand">
        <svg class="ds" viewBox="0 0 10 10"><path d="M3 1q4-1 3 1T2 5M1 9q4-1 4-4-4 1-4 4M9 5Q6 5 7 7t-2 2" fill="none" stroke="#189c98" stroke-width="1.200"/></svg>SIMULIA
      </div>
    </section>
  </div>

  <div class="messages">
    <div class="msgtabs"><button aria-label="Messages"><svg class="ic"><use href="#note"/></svg></button><button aria-label="Command line"><svg class="ic"><use href="#prompt"/></svg></button></div>
    <pre class="log" role="log">The job "Job-1" has been created.
The job input file "Job-1.inp" has been submitted for analysis.
Job Job-1: Analysis Input File Processor completed successfully.
Job Job-1: Abaqus/CFD completed successfully.
Job Job-1 completed successfully.</pre>
  </div>

  <footer class="taskbar">
    <button aria-label="Start"><svg class="ic"><use href="#win"/></svg></button><button aria-label="Explorer"><svg class="ic"><use href="#explorer"/></svg></button><button class="run" aria-label="Firefox"><svg class="ic"><use href="#firefox"/></svg></button><button class="run" aria-label="Maps"><svg class="ic ic-m"><use href="#maps"/></svg></button><button class="run" aria-label="Console"><svg class="ic"><use href="#cmd"/></svg></button><button class="run focus" aria-label="Abaqus"><svg class="ic"><use href="#logo"/></svg></button><button class="run" aria-label="Recorder"><svg class="ic"><use href="#pizza"/></svg></button>
    <div class="tray">
      <svg class="ic-t"><use href="#up"/></svg><svg class="ic-t"><use href="#net"/></svg><svg class="ic-t"><use href="#sound"/></svg>
      <time class="clock">10:42<br>14.12.2017</time>
      <svg class="ic-n"><use href="#notif"/></svg>
    </div>
  </footer>
</div>
</body>
</html>
```
FILE: styles.css
```
* { box-sizing: border-box; }
body {
  margin: 0;
  background: #000;
  color: #222;
  font: 5px/8px Inter, "Open Sans", sans-serif;
}
button, select { font: inherit; color: inherit; margin: 0; }
button { display: flex; align-items: center; justify-content: center; padding: 0; border: 0; background: none; }
svg { display: block; flex: none; }
.defs { position: absolute; width: 0; height: 0; }
.ic { width: 12px; height: 12px; }
.ic-s, .ic-t { width: 8px; height: 8px; }
.ic-m, .ic-n { width: 10px; height: 10px; }

.screen { display: flex; flex-direction: column; min-height: 100vh; margin: 0 22px; background: #f0f0f0; }

.titlebar { display: flex; align-items: center; gap: 3px; height: 11px; padding: 0 3px 0 1px; background: #fff; }
.title { flex: 1; }
.wbtn { width: 18px; }
.ic-w { width: 6px; height: 6px; fill: none; stroke: #333; stroke-width: .7; }

.menubar { display: flex; align-items: center; gap: 8px; height: 11px; padding: 0 3px 0 1px; background: #fbfbfb; border-bottom: 1px solid #e2e2e2; }
.menubar .ic-s { margin-right: -3px; }
.mdi { display: flex; gap: 4px; margin-left: auto; }

.bars { display: flex; align-items: center; height: 13px; }
.bar { display: flex; align-items: center; height: 13px; background: #f8f8f8; border: solid #ddd; border-width: 0 1px 1px 0; }
.bar button { width: 12px; height: 12px; }
.bar button .ic { width: 11px; height: 11px; }
.bar-view { margin-left: auto; margin-right: 155px; }
.bar-axes { margin-left: 33px; }
.bar-field { margin-left: auto; margin-right: 147px; gap: 1px; background: none; border: 0; }
.grip { width: 2px; height: 9px; margin: 0 1px; border-left: 1px dotted #888; }
.num { color: #c01818; font: bold 8px/10px "Liberation Sans", sans-serif; }
.on { background: #b8dcf8; }

.sel {
  appearance: none;
  height: 11px;
  padding: 0 6px 0 1px;
  border: 1px solid #a8a8a8;
  border-radius: 0;
  background: #fff url("data:image/svg+xml,%3Csvg xmlns='http://www.w3.org/2000/svg' width='6' height='9'%3E%3Cpath d='M0 0h6v9H0z' fill='%23e4e4e4'/%3E%3Cpath d='m1.500 4 1.500 1.500L4.500 4' fill='none' stroke='%23444' stroke-width='.8'/%3E%3C/svg%3E") right center no-repeat;
}
.w-primary { width: 36px; }
.w-var { width: 38px; }
.w-session { width: 28px; }
.w-module { width: 50px; }
.w-model { width: 102px; }
.spinsel { padding-left: 3px; border-left: 3px double #888; }

.work { display: flex; flex: 1; min-height: 0; }
.side { display: flex; flex-direction: column; width: 75px; padding: 2px 0 2px 2px; }
.tabs { display: flex; align-items: flex-end; }
.tabs button { height: 12px; padding: 0 3px; border: 1px solid #dcdcdc; border-bottom: 0; }
.tabs .cur { height: 13px; padding: 0 4px; background: #fff; }
.panel { display: flex; flex: 1; flex-direction: column; border: 1px solid #d0d0d0; background: #f8f8f8; }
.session { display: flex; align-items: center; gap: 1px; height: 16px; }
.tree { flex: 1; margin: 0; padding: 0 0 0 7px; list-style: none; background: #fff; border-top: 1px solid #ccc; }
.tree li { display: flex; align-items: center; gap: 2px; height: 9px; white-space: nowrap; position: relative; }
.tree li::before { content: ""; position: absolute; left: -5px; width: 4px; border-top: 1px dotted #aaa; }
.tree .exp::before { content: "+"; left: -6px; width: 5px; height: 5px; border: 1px solid #aab; font: 4px/3px "Liberation Sans", sans-serif; text-align: center; color: #446; }
.hscroll { display: flex; align-items: center; justify-content: space-between; height: 8px; padding: 0 2px; }
.hscroll i { flex: 1; height: 6px; margin: 0 7px 0 3px; background: #c8c8c8; }

.main { display: flex; flex: 1; flex-direction: column; min-width: 0; }
.context { display: flex; align-items: center; height: 17px; padding: 0 14px 0 6px; border-bottom: 1px solid #c8c8c8; background: #fafafa; }
.context label { margin-right: 3px; }
.context select + label { margin-left: 7px; }
.play { display: flex; gap: 4px; margin-left: auto; padding-right: 3px; }
.shots { gap: 3px; margin-left: 0; padding: 0 0 0 4px; border-left: 1px solid #999; }

.stage { display: flex; flex: 1; min-height: 0; padding-right: 1px; }
.tools { width: 32px; padding: 0 3px; background: #fafafa; border-right: 1px solid #ccc; }
.group { display: grid; grid-template-columns: 13px 13px; grid-auto-rows: 13px; padding: 1px 0; border-bottom: 1px solid #c0c0c0; }
.group.tall { padding-top: 2px; }
.group.last { border: 0; }
.view { flex: 1; min-width: 0; width: 100%; aspect-ratio: 488 / 313; background: linear-gradient(#16263e 0, #24384e 30%, #2c3c54 50%, #59687f 78%, #9caac6 100%); }
.vt { fill: #e0e4f0; font: 5px "DejaVu Sans", sans-serif; }
.vm { fill: #d8dcf0; font: 5px "DejaVu Sans Mono", monospace; }
.vh { fill: #b87044; font: 8px "Liberation Mono", monospace; }
.vt.head { fill: #e0e4f0; font-weight: bold; }
.vt.yel { fill: #e0d828; }
.vt.dim { fill: #9098b0; }

.brand { display: flex; align-items: center; justify-content: flex-end; gap: 3px; height: 17px; padding-right: 1px; color: #189c98; font: italic bold 7px/10px "DejaVu Sans", sans-serif; }
.ds { width: 10px; height: 10px; }

.messages { display: flex; height: 66px; padding: 1px 8px 2px 3px; }
.msgtabs { display: flex; flex-direction: column; gap: 5px; width: 16px; padding-top: 3px; }
.log { flex: 1; margin: 0; padding: 2px 1px; border: 1px solid #b0b0b8; background: #fafafa; font: 6px/6px "Liberation Mono", monospace; }

.taskbar { display: flex; height: 19px; background: #050607; color: #eee; }
.taskbar button { width: 23px; border-bottom: 2px solid transparent; }
.taskbar .run { border-image: linear-gradient(90deg, transparent 8%, #76b9ed 8% 92%, transparent 92%) 2; border-width: 0 0 2px; border-style: solid; }
.taskbar .focus { background: #333538; }
.tray { display: flex; align-items: center; gap: 3px; margin-left: auto; padding-right: 11px; }
.clock { width: 32px; text-align: center; line-height: 8px; }
```
